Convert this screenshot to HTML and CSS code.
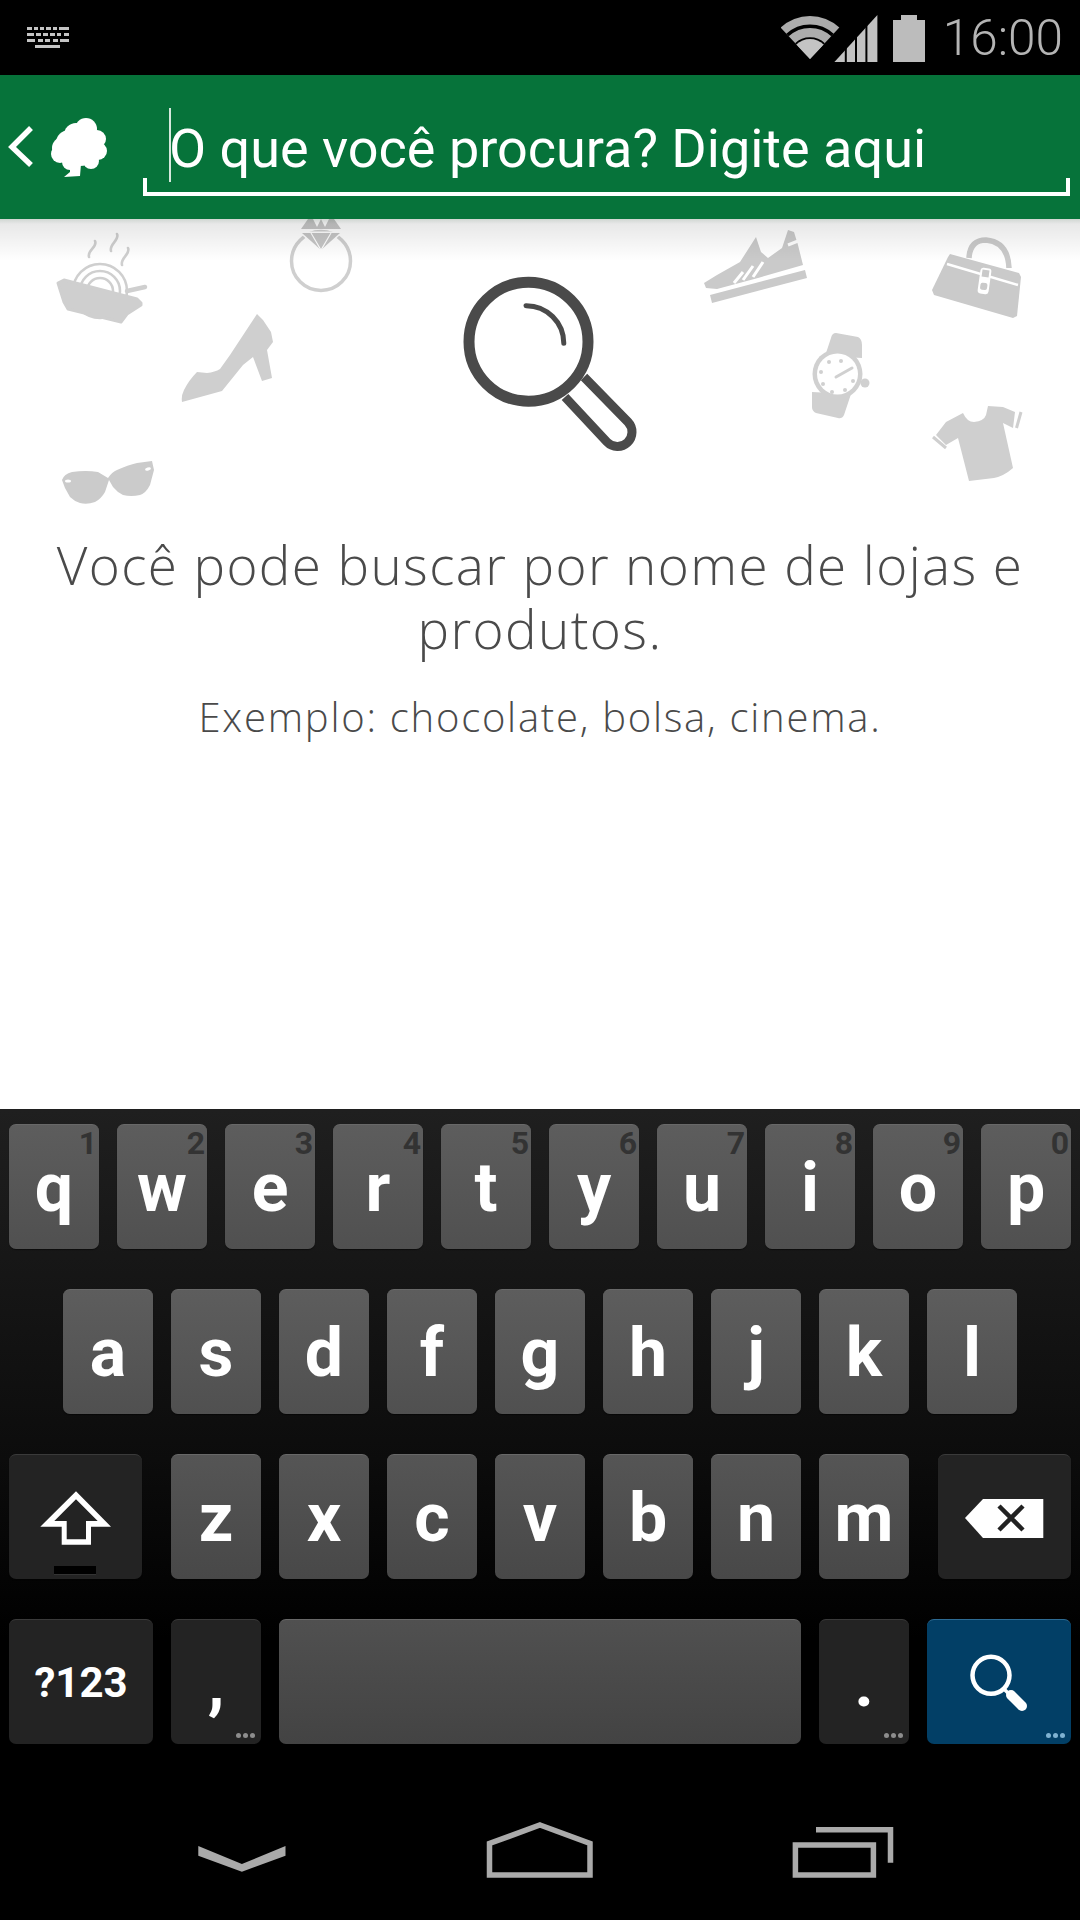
FILE: index.html
```html
<!DOCTYPE html>
<html lang="pt-BR">
<head>
    <meta charset="UTF-8">
    <title>Busca</title>
    <link rel="stylesheet" href="styles.css">
</head>
<body>
<div id="phone">
    <div id="status-bar">
        <svg class="kb-icon" width="42" height="22" viewBox="27 27 42 22">
            <g fill="#c4c4c4">
                <rect x="27" y="28" width="5" height="3"/><rect x="34" y="28" width="4" height="3"/><rect x="40" y="28" width="4" height="3"/><rect x="46" y="28" width="5" height="3"/><rect x="53" y="28" width="4" height="3"/><rect x="59" y="28" width="10" height="3"/>
                <rect x="27" y="34" width="7" height="3"/><rect x="36" y="34" width="5" height="3"/><rect x="43" y="34" width="5" height="3"/><rect x="50" y="34" width="5" height="3"/><rect x="57" y="34" width="4" height="3"/><rect x="64" y="34" width="5" height="3"/>
                <rect x="27" y="40" width="8" height="3"/><rect x="38" y="40" width="5" height="3"/><rect x="45" y="40" width="5" height="3"/><rect x="53" y="40" width="5" height="3"/><rect x="60" y="40" width="9" height="3"/>
                <rect x="35" y="46" width="25" height="3"/>
            </g>
        </svg>
        <div class="status-right">
            <svg width="59" height="44" viewBox="781 15 59 44">
                <path d="M810 58 L780.7 26.6 A43 43 0 0 1 839.3 26.6 Z" fill="#acacac"/>
                <path d="M787.5 34 A33 33 0 0 1 832.5 34 M796.3 43.5 A20 20 0 0 1 823.7 43.5" fill="none" stroke="#000" stroke-width="3.5"/>
                <path d="M810 58 L796.3 43.5 A20 20 0 0 1 823.7 43.5 Z" fill="#c4c4c4"/>
            </svg>
            <svg class="signal" width="44" height="48" viewBox="833 12 44 48">
                <path d="M833.4 60 L876.4 13 V60 Z" fill="#c2c2c2"/>
                <path d="M844.8 12 V60 M855 12 V60 M865.4 12 V60" stroke="#000" stroke-width="2"/>
            </svg>
            <svg class="battery" width="32" height="48" viewBox="892 12 32 48">
                <path d="M900 13 H916 V18 H924 V60 H892 V18 H900 Z" fill="#bcbcbc"/>
            </svg>
            <span class="clock">16:00</span>
        </div>
    </div>

    <div id="top-bar">
        <svg class="back-logo" width="108" height="64" viewBox="0 116 108 64">
            <path d="M31 128 L12 147 L31 165" fill="none" stroke="#fff" stroke-width="5.5"/>
            <g fill="#fff">
                <circle cx="86" cy="129" r="11"/><circle cx="97" cy="139" r="9"/><circle cx="98" cy="151" r="9"/>
                <circle cx="91" cy="161" r="8"/><circle cx="69" cy="143" r="13"/><circle cx="60" cy="154" r="9"/>
                <circle cx="70" cy="162" r="8"/><circle cx="80" cy="148" r="18"/>
                <circle cx="76" cy="135" r="12"/><circle cx="63" cy="148" r="11"/>
                <path d="M64 177 L80 176 L81 164 L70 164 L70 172 Z"/>
            </g>
        </svg>
        <div class="search-field">
            <span class="caret"></span>
            <span class="placeholder">O que você procura? Digite aqui</span>
        </div>
    </div>

    <div id="content">
        <div class="bar-shadow"></div>
        <svg class="hero" width="1080" height="300" viewBox="0 219 1080 300">
            <!-- prato -->
            <g fill="none" stroke="#cfcfcf" stroke-width="2.6">
                <circle cx="100" cy="291" r="27"/><circle cx="100" cy="291" r="20"/><circle cx="100" cy="291" r="13"/>
                <path d="M95 241 c3 6 -8 9 -6 16 M117 234 c3 6 -8 10 -6 17 M128 248 c3 6 -8 10 -6 17" stroke-linecap="round"/>
            </g>
            <path d="M127 291 L145 287" stroke="#cfcfcf" stroke-width="4.5" stroke-linecap="round"/>
            <path d="M58 283 L64 280 L137 299 L141 303 L141 305 L127 314 L121 322 L68 309 L64 302 Z" fill="#cfcfcf" stroke="#cfcfcf" stroke-width="3" stroke-linejoin="round"/>
            <!-- anel -->
            <circle cx="321" cy="261" r="29.5" fill="none" stroke="#cfcfcf" stroke-width="3.5"/>
            <path d="M301 229 L308 219 H313 L318 229 Z M316 229 L321 219 L326 229 Z M324 229 L329 219 H334 L341 229 Z" fill="#c6c6c6"/>
            <path d="M302 233 H340 L321 250 Z" fill="#c6c6c6" stroke="#fff" stroke-width="3" paint-order="stroke"/>
            <path d="M311 233 L321 250 L331 233" fill="none" stroke="#fff" stroke-width="1.2"/>
            <!-- sapato -->
            <path d="M182 402 Q181 396 184 390 Q189 380 197 372 L207 373 Q215 372 220 369 L230 355 L257 314 L263 320 L271 332 L273 342 L267 350 L272 378 L262 381 L253 357 L243 365 L222 391 Z" fill="#cfcfcf"/>
            <!-- oculos -->
            <path d="M62 480 Q64 474 72 472 Q86 470 98 472 L108 478 Q112 472 117 470 Q128 465 137 463 L152 461 L154 470 L150 485 Q146 493 140 495 Q131 497 123 495 Q117 492 113 487 L109 480 L105 492 Q101 499 95 502 Q87 505 80 503 Q74 501 70 497 L65 488 Z" fill="#cbcbcb"/>
            <ellipse cx="68" cy="481" rx="3" ry="1.6" fill="#fff"/>
            <ellipse cx="148" cy="469" rx="3" ry="1.6" fill="#fff" transform="rotate(-15 148 469)"/>
            <!-- lupa -->
            <g fill="none" stroke="#4a4a4a">
                <circle cx="528.5" cy="341.7" r="59.5" stroke-width="11"/>
                <path d="M526 305.7 A37.6 37.6 0 0 1 563.8 343.3" stroke-width="5" stroke-linecap="round"/>
                <path d="M584 377 L628 422 A14.5 14.5 0 0 1 607 442 L565 397" stroke-width="9"/>
            </g>
            <!-- tenis -->
            <path d="M704 283 L717 275 L740 262 L756 237 L761 252 L768 258 L782 248 L788 230 L794 232 L798 245 L803 265 L758 278 L717 289 L706 288 Z" fill="#cacaca"/>
            <path d="M710 295 L805 270 L807 278 L712 303 Z" fill="#cacaca"/>
            <path d="M734 283 L743 272 M743 280 L753 266 M753 277 L763 262 M788 245 L798 241" stroke="#fff" stroke-width="3" fill="none"/>
            <!-- bolsa -->
            <path d="M969 258 Q970 240 986 240 Q1008 242 1009 268" fill="none" stroke="#cacaca" stroke-width="5.5"/>
            <path d="M950 254 L1019 273 L1021 277 L1017 316 L1013 318 L934 295 L932 290 L948 257 Z" fill="#cacaca"/>
            <path d="M947 264 L1018 285" stroke="#fff" stroke-width="2.5"/>
            <rect x="979" y="268" width="11" height="26" rx="3" fill="#fff" transform="rotate(8 985 281)"/>
            <rect x="981" y="270" width="7" height="7" fill="#cacaca" transform="rotate(8 985 281)"/>
            <rect x="981" y="283" width="7" height="7" rx="2" fill="#cacaca" transform="rotate(8 985 281)"/>
            <!-- relogio -->
            <g fill="#d0d0d0">
                <path d="M836 333 L858 337 Q862 339 862 345 L862 358 L825 356 L831 338 Q832 333 836 333 Z"/>
                <path d="M812 392 L851 394 L844 415 Q842 419 838 418 L816 413 Q812 411 812 407 Z"/>
                <circle cx="837.5" cy="374" r="25"/>
                <circle cx="865" cy="383" r="4.5"/>
            </g>
            <circle cx="837.5" cy="374" r="20.5" fill="#fff"/>
            <g fill="#d0d0d0">
                <circle cx="829" cy="362" r="2"/><circle cx="841" cy="361" r="2"/><circle cx="821" cy="372" r="2"/>
                <circle cx="853" cy="381" r="2"/><circle cx="823" cy="384" r="2"/><circle cx="832" cy="392" r="2"/><circle cx="845" cy="390" r="2"/>
            </g>
            <path d="M836 377 L852 368" stroke="#d0d0d0" stroke-width="3" stroke-linecap="round"/>
            <!-- camiseta -->
            <path d="M963 413 Q967 422 974 422 Q984 421 986 415 L988 406 L1003 407 L1015 412 L1013 428 L1003 423 L1013 468 Q1004 476 994 478 L969 481 L958 438 L946 445 L936 435 L946 422 Z" fill="#cfcfcf"/>
            <path d="M1021 412 L1016.5 428 M933 437 L946 448" stroke="#cfcfcf" stroke-width="3"/>
        </svg>
        <h1 class="title">Você pode buscar por nome de lojas e produtos.</h1>
        <p class="example">Exemplo: chocolate, bolsa, cinema.</p>
    </div>

    <div id="keyboard">
        <div class="row">
            <div class="key"><span class="num">1</span>q</div>
            <div class="key"><span class="num">2</span>w</div>
            <div class="key"><span class="num">3</span>e</div>
            <div class="key"><span class="num">4</span>r</div>
            <div class="key"><span class="num">5</span>t</div>
            <div class="key"><span class="num">6</span>y</div>
            <div class="key"><span class="num">7</span>u</div>
            <div class="key"><span class="num">8</span>i</div>
            <div class="key"><span class="num">9</span>o</div>
            <div class="key"><span class="num">0</span>p</div>
        </div>
        <div class="row row-center">
            <div class="key">a</div>
            <div class="key">s</div>
            <div class="key">d</div>
            <div class="key">f</div>
            <div class="key">g</div>
            <div class="key">h</div>
            <div class="key">j</div>
            <div class="key">k</div>
            <div class="key">l</div>
        </div>
        <div class="row row-split">
            <div class="key dark wide">
                <svg width="74" height="56" viewBox="38 1488 74 56">
                    <path fill-rule="evenodd" d="M75 1489.3 L110 1524.7 H90 V1542.7 H60.7 V1524.7 H39.3 Z M75 1497.3 L53.3 1519 H65.7 V1537.3 H85 V1519 H96.7 Z" fill="#fff"/>
                </svg>
                <span class="shift-mark"></span>
            </div>
            <div class="letters">
                <div class="key">z</div>
                <div class="key">x</div>
                <div class="key">c</div>
                <div class="key">v</div>
                <div class="key">b</div>
                <div class="key">n</div>
                <div class="key">m</div>
            </div>
            <div class="key dark wide">
                <svg width="79" height="40" viewBox="965 1497 79 40">
                    <path d="M965 1517 L983 1498 H1043.3 V1537 H983 Z" fill="#fff"/>
                    <path d="M999 1505 L1023 1529 M1023 1505 L999 1529" stroke="#222" stroke-width="4.5"/>
                </svg>
            </div>
        </div>
        <div class="row">
            <div class="key dark sym">?123</div>
            <div class="key dark punct">,<span class="dots"><i></i><i></i><i></i></span></div>
            <div class="key space"></div>
            <div class="key dark punct">.<span class="dots"><i></i><i></i><i></i></span></div>
            <div class="key action">
                <svg width="62" height="62" viewBox="968 1650 62 62">
                    <circle cx="991" cy="1673.3" r="18.5" fill="none" stroke="#fff" stroke-width="4.5"/>
                    <path d="M1004 1687 L1010 1693" stroke="#fff" stroke-width="3.5"/>
                    <path d="M1011 1693 L1022 1704" stroke="#fff" stroke-width="10" stroke-linecap="round"/>
                </svg>
                <span class="dots blue"><i></i><i></i><i></i></span>
            </div>
        </div>
    </div>

    <div id="nav-bar">
        <svg width="90" height="60" viewBox="198.5 1820 90 60">
            <path d="M198.8 1846 L242.4 1864 L286 1846 V1855.7 L242.4 1871.7 L198.8 1855.7 Z" fill="#aaa"/>
        </svg>
        <svg width="108" height="60" viewBox="486 1820 108 60">
            <path d="M540 1825 L590 1843.5 V1875 H489.5 V1843.5 Z" fill="none" stroke="#aaa" stroke-width="5.5"/>
        </svg>
        <svg width="102" height="60" viewBox="792 1820 102 60">
            <rect x="795.4" y="1845" width="78" height="30" fill="none" stroke="#aaa" stroke-width="5.5"/>
            <path d="M816 1829.8 H890.5 V1862.7" fill="none" stroke="#aaa" stroke-width="5.5"/>
        </svg>
    </div>
</div>
</body>
</html>
```

FILE: styles.css
```css
*{
    margin: 0;
    padding: 0;
    box-sizing: border-box;
}
html, body{
    background: #000;
}
svg{
    display: block;
}
#phone{
    width: 1080px;
    height: 1920px;
    display: flex;
    flex-direction: column;
    overflow: hidden;
    font-family: Roboto, "Liberation Sans", sans-serif;
}

/* barra de status */
#status-bar{
    height: 75px;
    background: #000;
    display: flex;
    justify-content: space-between;
    align-items: center;
    padding: 0 17px 0 27px;
}
.kb-icon{
    margin-top: -1px;
}
.status-right{
    display: flex;
    align-items: center;
}
.signal{
    margin-left: -6px;
}
.battery{
    margin-left: 15px;
}
.clock{
    margin-left: 18px;
    font-size: 49.5px;
    font-weight: 300;
    color: #b4b4b4;
}

/* barra verde */
#top-bar{
    height: 144px;
    background: #06733a;
    display: flex;
}
.back-logo{
    margin-top: 41px;
}
.search-field{
    width: 927px;
    height: 88px;
    margin: 33px 0 0 35px;
    padding-left: 26px;
    position: relative;
    display: flex;
    align-items: flex-start;
    border-bottom: 4px solid #fff;
}
.search-field::before, .search-field::after{
    content: "";
    position: absolute;
    bottom: 0;
    width: 4px;
    height: 14px;
    background: #fff;
}
.search-field::before{
    left: 0;
}
.search-field::after{
    right: 0;
}
.caret{
    width: 2px;
    height: 74px;
    background: #d5e8dc;
    flex-shrink: 0;
}
.placeholder{
    margin-left: -2px;
    padding-top: 4px;
    font-size: 54px;
    line-height: 74px;
    color: #fff;
    white-space: nowrap;
}

/* conteudo */
#content{
    height: 890px;
    background: #fff;
    position: relative;
    color: #4a4a4a;
    text-align: center;
    font-family: "Open Sans", Lato, sans-serif;
    font-weight: 300;
}
.bar-shadow{
    position: absolute;
    left: 0;
    top: 0;
    width: 100%;
    height: 42px;
    background: linear-gradient(to bottom, rgba(20, 50, 30, 0.2) 0, rgba(0, 0, 0, 0.09) 5px, rgba(0, 0, 0, 0) 100%);
}
.title{
    margin: 14px 40px 0;
    font-size: 53px;
    font-weight: 300;
    line-height: 63.5px;
    letter-spacing: 1.4px;
}
.example{
    margin-top: 32px;
    font-size: 40px;
    line-height: 50px;
    letter-spacing: 1.75px;
}

/* teclado */
#keyboard{
    height: 634px;
    padding: 15px 9px 0;
    background: linear-gradient(to bottom, #1f1f1f 0, #0c0c0c 350px, #000 530px);
    display: flex;
    flex-direction: column;
    gap: 40px;
}
.row{
    display: flex;
    gap: 18px;
}
.row-center{
    justify-content: center;
}
.row-split{
    justify-content: space-between;
}
.letters{
    display: flex;
    gap: 18px;
}
.key{
    width: 90px;
    height: 125px;
    border-radius: 7px;
    position: relative;
    display: flex;
    align-items: center;
    justify-content: center;
    padding-top: 1px;
    background: linear-gradient(to bottom, #5d5d5d, #505050);
    border-top: 1px solid #686868;
    box-shadow: 0 1px 1px rgba(0, 0, 0, 0.5);
    color: #fff;
    font-size: 68px;
    font-weight: 700;
    line-height: 1;
}
.letters .key{
    background: linear-gradient(to bottom, #555, #484848);
}
.num{
    position: absolute;
    right: 2px;
    top: 0;
    font-size: 32px;
    line-height: 36px;
    color: #333;
}
.dark{
    background: #232323;
    border-top-color: #3a3a3a;
}
.wide{
    width: 133px;
}
.sym{
    width: 144px;
    font-size: 42px;
}
.space{
    width: 522px;
    background: linear-gradient(to bottom, #505050, #434343);
}
.action{
    width: 144px;
    background: #023f66;
    border-top-color: #2d6b93;
}
.punct{
    font-size: 68px;
}
.shift-mark{
    position: absolute;
    left: 45px;
    top: 111px;
    width: 42px;
    height: 9px;
    background: #000;
    border-bottom: 1px solid #333;
}
.dots{
    position: absolute;
    right: 6px;
    bottom: 6px;
    display: flex;
    gap: 2px;
}
.dots i{
    width: 5px;
    height: 5px;
    border-radius: 50%;
    background: #8d8d8d;
}
.dots.blue i{
    background: #7fb2d1;
}

/* botoes do sistema */
#nav-bar{
    height: 177px;
    background: #000;
    display: flex;
    padding: 77px 0 0 198px;
    gap: 198px;
}
```
